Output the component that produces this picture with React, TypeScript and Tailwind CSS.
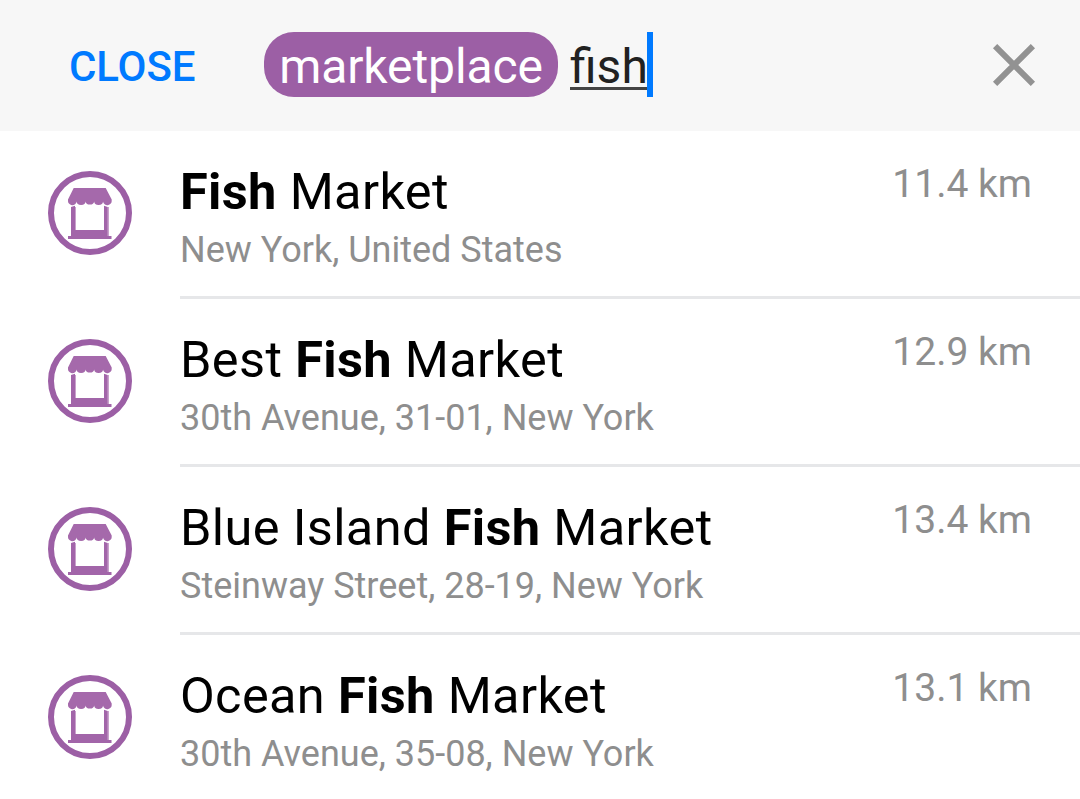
import React from "react";

const places = [
  { before: "", after: " Market", address: "New York, United States", distance: "11.4 km" },
  { before: "Best ", after: " Market", address: "30th Avenue, 31-01, New York", distance: "12.9 km" },
  { before: "Blue Island ", after: " Market", address: "Steinway Street, 28-19, New York", distance: "13.4 km" },
  { before: "Ocean ", after: " Market", address: "30th Avenue, 35-08, New York", distance: "13.1 km" },
];

function MarketIcon() {
  return (
    <svg className="mt-[40px] ml-12 h-[84px] w-[84px] shrink-0" viewBox="0 0 84 84" fill="none">
      <circle cx="42" cy="42" r="39" stroke="#9c5fa5" strokeWidth="6" />
      <path d="M25.7 17H57.7L63.7 28.5V29.5A4.37 4.2 0 0 1 55 30.5A4.37 3.4 0 0 1 46.2 30.5A4.37 3.4 0 0 1 37.5 30.5A4.37 3.4 0 0 1 28.7 30.5A4.37 4.2 0 0 1 20 29.5V28.5Z" fill="#a569ab" />
      <path d="M27 36H28V59H27ZM59.5 36H61V65H59.5Z" fill="#c9a1cc" />
      <path d="M23 36L27 34.8V59H56V34.8L59.7 36V65H63.5V68H20V65H23Z" fill="#a265a9" />
    </svg>
  );
}

export default function App() {
  return (
    <div className="h-[799px] w-[1080px] overflow-hidden bg-white font-['Roboto',sans-serif]">
      <header className="flex h-[131px] items-start bg-[#f7f7f7] pt-8">
        <button className="ml-[69px] h-[65px] w-[127px] text-left text-[42px] leading-[69px] font-medium tracking-[-0.1px] whitespace-nowrap text-[#007aff]">CLOSE</button>
        <div className="ml-[68px] flex h-[65px] text-[48px] leading-[69px] whitespace-nowrap">
          <span className="w-[294px] rounded-[30px] bg-[#9c5fa5] text-center tracking-[-0.1px] text-white">marketplace</span>
          <span className="ml-3 w-[77px] text-[#212121] underline decoration-[#444] decoration-3 underline-offset-4">fish</span>
          <span className="h-[65px] w-[6px] bg-[#007aff]" />
        </div>
        <svg className="mt-3 ml-[339px] h-[42px] w-[44px]" viewBox="0 0 44 42" stroke="#929292" strokeWidth="6">
          <path d="M3.1 2.1L40.9 39.9M40.9 2.1L3.1 39.9" />
        </svg>
      </header>
      <main>
        {places.map((place) => (
          <section key={place.address} className="flex h-[168px]">
            <MarketIcon />
            <div className="ml-12 flex flex-1 justify-between border-b-3 border-[#e6e7e9] pr-12">
              <div className="pt-[31px] whitespace-nowrap">
                <h2 className="text-[50.5px] leading-[60px] font-normal tracking-[0.36px] text-black">{place.before}<b>Fish</b>{place.after}</h2>
                <p className="mt-[6px] text-[36px] leading-[44px] text-[#8e8e8e]">{place.address}</p>
              </div>
              <span className="pt-[30px] text-[39px] leading-[46px] whitespace-nowrap text-[#8e8e8e]">{place.distance}</span>
            </div>
          </section>
        ))}
      </main>
    </div>
  );
}
